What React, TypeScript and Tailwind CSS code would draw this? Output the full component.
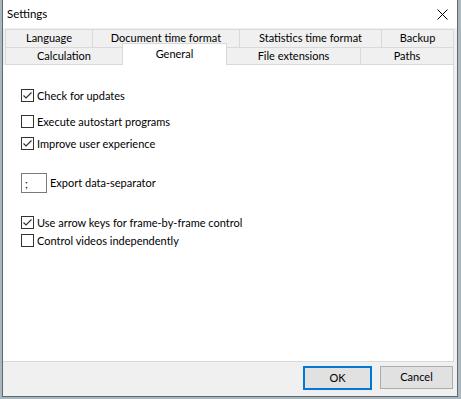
import React, { useState } from 'react';

const font = { fontFamily: 'Lato, "Noto Sans", sans-serif' };

const Check = ({ checked, label, onToggle }: { checked: boolean; label: string; onToggle: () => void }) => (
  <div className="flex items-center h-[13px] cursor-default" onClick={onToggle}>
    <span className="w-[13px] h-[13px] border border-[#333333] bg-white flex items-center justify-center shrink-0">
      {checked && (
        <svg width="11" height="11" viewBox="0 0 11 11">
          <path d="M1.5 5.5 L4 8 L9.5 2.5" fill="none" stroke="#333333" strokeWidth="1.2" />
        </svg>
      )}
    </span>
    <span className="ml-[3px] text-[11px] leading-none text-black whitespace-nowrap">{label}</span>
  </div>
);

export default function App() {
  const [opts, setOpts] = useState({
    updates: true,
    autostart: false,
    experience: true,
    arrows: true,
    videos: false,
  });
  const flip = (k: keyof typeof opts) => setOpts({ ...opts, [k]: !opts[k] });

  const row1 = [
    { label: 'Language', w: 'w-[87px]' },
    { label: 'Document time format', w: 'w-[147px]' },
    { label: 'Statistics time format', w: 'w-[142px]' },
    { label: 'Backup', w: 'w-[73px] border-r' },
  ];

  return (
    <div className="w-[461px] h-[399px] bg-[#a9b8be] pl-[2px] overflow-hidden" style={font}>
      <div className="w-[456px] h-[397px] border-x border-b border-[#5f6a70] bg-[#f0f0f0] flex flex-col">
        {/* title bar */}
        <div className="h-[28px] bg-white flex items-center justify-between pl-[4px] pr-[8px]">
          <span className="text-[11.5px] text-black">Settings</span>
          <svg width="11" height="11" viewBox="0 0 11 11" className="mr-[1px]">
            <path d="M0.5 0.5 L10.5 10.5 M10.5 0.5 L0.5 10.5" stroke="#000" strokeWidth="1" />
          </svg>
        </div>

        {/* tabs */}
        <div className="mt-[1px] ml-[2px] flex flex-col text-[11px] text-black">
          <div className="flex h-[18px]">
            {row1.map((t) => (
              <div key={t.label} className={`${t.w} border-l border-t border-[#d9d9d9] bg-[#f0f0f0] flex items-center justify-center`}>
                {t.label}
              </div>
            ))}
          </div>
          <div className="flex items-end h-[18px]">
            <div className="w-[117px] h-[18px] border-l border-t border-b border-[#d9d9d9] flex items-center justify-center">Calculation</div>
            <div className="w-[105px] h-[22px] border-x border-t border-[#d9d9d9] bg-white flex items-center justify-center">General</div>
            <div className="w-[133px] h-[18px] border-t border-b border-[#d9d9d9] flex items-center justify-center">File extensions</div>
            <div className="w-[94px] h-[18px] border-l border-r border-t border-b border-[#d9d9d9] flex items-center justify-center">Paths</div>
          </div>
        </div>

        {/* panel */}
        <div className="w-[451px] h-[297px] bg-white border-r border-b border-[#d9d9d9] pl-[18px] flex flex-col">
          <div className="mt-[24px]">
            <Check checked={opts.updates} label="Check for updates" onToggle={() => flip('updates')} />
          </div>
          <div className="mt-[13px]">
            <Check checked={opts.autostart} label="Execute autostart programs" onToggle={() => flip('autostart')} />
          </div>
          <div className="mt-[9px]">
            <Check checked={opts.experience} label="Improve user experience" onToggle={() => flip('experience')} />
          </div>
          <div className="mt-[23px] flex items-center">
            <input
              defaultValue=";"
              className="w-[26px] h-[20px] border border-[#7a7a7a] px-[3px] text-[11px] text-black outline-none"
              style={font}
            />
            <span className="ml-[3px] text-[11px] text-black">Export data-separator</span>
          </div>
          <div className="mt-[23px]">
            <Check checked={opts.arrows} label="Use arrow keys for frame-by-frame control" onToggle={() => flip('arrows')} />
          </div>
          <div className="mt-[5px]">
            <Check checked={opts.videos} label="Control videos independently" onToggle={() => flip('videos')} />
          </div>
        </div>

        {/* buttons */}
        <div className="flex-1 flex items-start justify-end pt-[4px] pr-[4px] gap-[8px] text-[11px] text-black">
          <button className="w-[69px] h-[24px] border-2 border-[#0078d7] bg-[#e1e1e1]" style={font}>OK</button>
          <button className="w-[73px] h-[23px] border border-[#adadad] bg-[#e1e1e1]" style={font}>Cancel</button>
        </div>
      </div>
    </div>
  );
}
